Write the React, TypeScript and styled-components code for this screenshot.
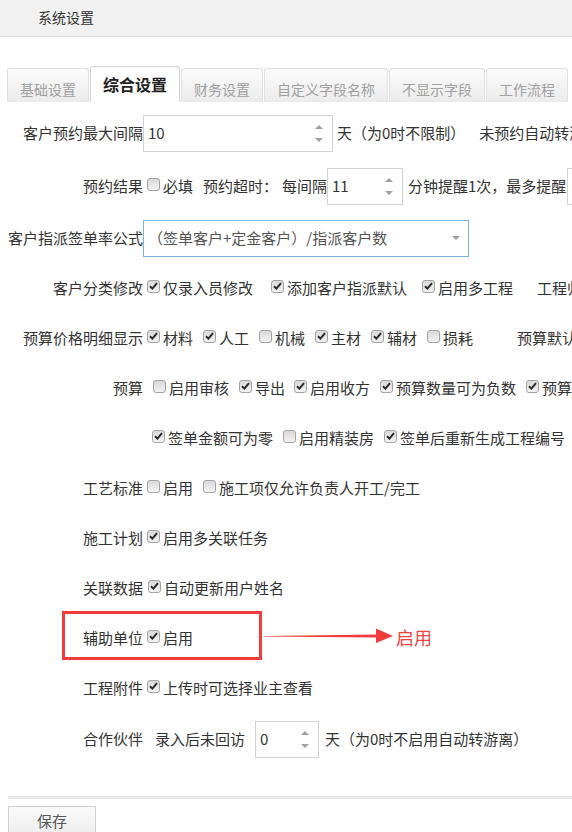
import styled, { createGlobalStyle } from "styled-components";

const GlobalStyle = createGlobalStyle`
  html, body {
    margin: 0;
    padding: 0;
    background: #fff;
    overflow: hidden;
  }
  body {
    font-family: "Noto Sans CJK SC", "Microsoft YaHei", sans-serif;
    font-size: 15px;
    color: #333;
  }
`;

const Page = styled.div`
  width: 572px;
  height: 832px;
  overflow: hidden;
`;

const TopBar = styled.div`
  height: 37px;
  box-sizing: border-box;
  padding: 0 0 3px 38px;
  display: flex;
  align-items: center;
  background: #f1f1f1;
  border-bottom: 1px solid #dcdcdc;
  font-size: 14px;
  color: #333;
`;

const TabBar = styled.div`
  display: flex;
  align-items: flex-end;
  gap: 1px;
  padding: 28px 0 0 7px;
  height: 37px;
  white-space: nowrap;
`;

const Tab = styled.div<{ active?: boolean }>`
  flex: none;
  display: flex;
  align-items: center;
  box-sizing: border-box;
  height: ${({ active }) => (active ? 36 : 34)}px;
  padding: ${({ active }) => (active ? "0 12px 2px" : "6px 12px 0")};
  border: 1px solid ${({ active }) => (active ? "#d4d4d4" : "#e0e0e0")};
  border-bottom: none;
  border-radius: 3px 3px 0 0;
  background: ${({ active }) =>
    active ? "#fff" : "linear-gradient(#fbfbfb, #ebebeb)"};
  color: ${({ active }) => (active ? "#222" : "#a0a0a0")};
  font-size: ${({ active }) => (active ? 16 : 14)}px;
  font-weight: ${({ active }) => (active ? 700 : 400)};
`;

const Form = styled.div`
  padding-top: 5px;
`;

const Row = styled.div<{ h?: number }>`
  position: relative;
  display: flex;
  align-items: center;
  height: ${({ h }) => h ?? 50}px;
  white-space: nowrap;
  line-height: 20px;
`;

const Label = styled.span`
  flex: none;
  width: 143px;
  text-align: right;
`;

const Text = styled.span<{ ml?: number }>`
  flex: none;
  margin-left: ${({ ml }) => ml ?? 0}px;
`;

const Option = styled.span<{ lead?: number; mr?: number }>`
  flex: none;
  display: inline-flex;
  align-items: center;
  margin-left: ${({ lead }) => lead ?? 4}px;
  margin-right: ${({ mr }) => mr ?? 6}px;
`;

const Box = styled.span`
  flex: none;
  position: relative;
  top: -2px;
  width: 11px;
  height: 11px;
  margin-right: 3px;
  display: flex;
  align-items: center;
  justify-content: center;
  border: 1px solid #a3a3a3;
  border-radius: 3px;
  background: linear-gradient(#d9d9d9, #f3f3f3);
`;

const NumberBox = styled.div<{ w: number; ml?: number }>`
  flex: none;
  display: flex;
  align-items: center;
  box-sizing: border-box;
  width: ${({ w }) => w}px;
  height: 37px;
  margin-left: ${({ ml }) => ml ?? 0}px;
  padding: 0 9px 0 4px;
  border: 1px solid #d2d2d2;
  background: #fff;
  color: #333;
`;

const NumberValue = styled.span`
  flex: 1;
`;

const Spinner = styled.span`
  display: flex;
  flex-direction: column;
  gap: 9px;
`;

const Arrow = styled.span<{ up?: boolean }>`
  width: 0;
  height: 0;
  border-left: 4px solid transparent;
  border-right: 4px solid transparent;
  ${({ up }) =>
    up ? "border-bottom: 4px solid #a0a0a0;" : "border-top: 4px solid #a0a0a0;"}
`;

const Select = styled.div`
  flex: none;
  display: flex;
  align-items: center;
  justify-content: space-between;
  box-sizing: border-box;
  width: 326px;
  height: 37px;
  padding: 0 8px 0 4px;
  border: 1px solid #7cb6d6;
  color: #555;
`;

const Divider = styled.div`
  height: 3px;
  margin: 31px 0 0 8px;
  background: #e6e6e6;
`;

const SaveButton = styled.button`
  display: block;
  box-sizing: border-box;
  width: 88px;
  height: 32px;
  margin: 7px 0 0 8px;
  padding: 0 0 3px;
  border: 1px solid #cfcfcf;
  background: linear-gradient(#fafafa, #ececec);
  font-family: inherit;
  font-size: 15px;
  color: #555;
`;

const Highlight = styled.div`
  position: absolute;
  left: 62px;
  top: -2px;
  width: 200px;
  height: 49px;
  box-sizing: border-box;
  border: 3px solid #f03c3c;
`;

const Pointer = styled.svg`
  position: absolute;
  left: 264px;
  top: 15px;
`;

const Note = styled.span`
  position: absolute;
  left: 396px;
  top: 12px;
  font-size: 18px;
  line-height: 24px;
  color: #f04444;
`;

function Check({ on }: { on?: boolean }) {
  return (
    <Box>
      {on && (
        <svg width="9" height="8" viewBox="0 0 9 8">
          <path d="M1 4.2 L3.4 6.6 L8 1.2" fill="none" stroke="#2a2a2a" strokeWidth="2" />
        </svg>
      )}
    </Box>
  );
}

function Opt({
  on,
  text,
  lead,
  mr,
}: {
  on?: boolean;
  text: string;
  lead?: number;
  mr?: number;
}) {
  return (
    <Option lead={lead} mr={mr}>
      <Check on={on} />
      {text}
    </Option>
  );
}

function NumberInput({ value, w, ml }: { value: string; w: number; ml?: number }) {
  return (
    <NumberBox w={w} ml={ml}>
      <NumberValue>{value}</NumberValue>
      <Spinner>
        <Arrow up />
        <Arrow />
      </Spinner>
    </NumberBox>
  );
}

const tabs = ["基础设置", "综合设置", "财务设置", "自定义字段名称", "不显示字段", "工作流程"];

export default function App() {
  return (
    <Page>
      <GlobalStyle />
      <TopBar>系统设置</TopBar>

      <TabBar>
        {tabs.map((t) => (
          <Tab key={t} active={t === "综合设置"}>
            {t}
          </Tab>
        ))}
      </TabBar>

      <Form>
        <Row h={52}>
          <Label>客户预约最大间隔</Label>
          <NumberInput value="10" w={190} />
          <Text ml={4}>天（为0时不限制）</Text>
          <Text ml={14}>未预约自动转游离</Text>
        </Row>

        <Row h={54}>
          <Label>预约结果</Label>
          <Opt text="必填" />
          <Text ml={4}>预约超时：</Text>
          <Text ml={4}>每间隔</Text>
          <NumberInput value="11" w={76} />
          <Text ml={5}>分钟提醒1次，最多提醒</Text>
          <NumberInput value="3" w={60} ml={1} />
        </Row>

        <Row>
          <Label>客户指派签单率公式</Label>
          <Select>
            （签单客户+定金客户）/指派客户数
            <Arrow />
          </Select>
        </Row>

        <Row>
          <Label>客户分类修改</Label>
          <Opt on text="仅录入员修改" mr={14} />
          <Opt on text="添加客户指派默认" mr={11} />
          <Opt on text="启用多工程" />
          <Text ml={18}>工程归属</Text>
        </Row>

        <Row>
          <Label>预算价格明细显示</Label>
          <Opt on text="材料" />
          <Opt on text="人工" />
          <Opt text="机械" />
          <Opt on text="主材" />
          <Opt on text="辅材" />
          <Opt text="损耗" />
          <Text ml={38}>预算默认</Text>
        </Row>

        <Row>
          <Label>预算</Label>
          <Opt text="启用审核" lead={10} />
          <Opt on text="导出" mr={5} />
          <Opt on text="启用收方" />
          <Opt on text="预算数量可为负数" />
          <Opt on text="预算数据" />
        </Row>

        <Row>
          <Label />
          <Opt on text="签单金额可为零" lead={9} />
          <Opt text="启用精装房" />
          <Opt on text="签单后重新生成工程编号" />
        </Row>

        <Row>
          <Label>工艺标准</Label>
          <Opt text="启用" />
          <Opt text="施工项仅允许负责人开工/完工" />
        </Row>

        <Row>
          <Label>施工计划</Label>
          <Opt on text="启用多关联任务" />
        </Row>

        <Row>
          <Label>关联数据</Label>
          <Opt on text="自动更新用户姓名" lead={5} />
        </Row>

        <Row>
          <Label>辅助单位</Label>
          <Opt on text="启用" />
          <Highlight />
          <Pointer width="130" height="16" viewBox="0 0 130 16">
            <polygon points="0,8 113,6.4 113,9.6 0,8.6" fill="#f03c3c" />
            <polygon points="112,0.5 129,8 112,15" fill="#f03c3c" />
          </Pointer>
          <Note>启用</Note>
        </Row>

        <Row>
          <Label>工程附件</Label>
          <Opt on text="上传时可选择业主查看" />
        </Row>

        <Row h={52}>
          <Label>合作伙伴</Label>
          <Text ml={12}>录入后未回访</Text>
          <NumberInput value="0" w={64} ml={10} />
          <Text ml={6}>天（为0时不启用自动转游离）</Text>
        </Row>
      </Form>

      <Divider />
      <SaveButton>保存</SaveButton>
    </Page>
  );
}
